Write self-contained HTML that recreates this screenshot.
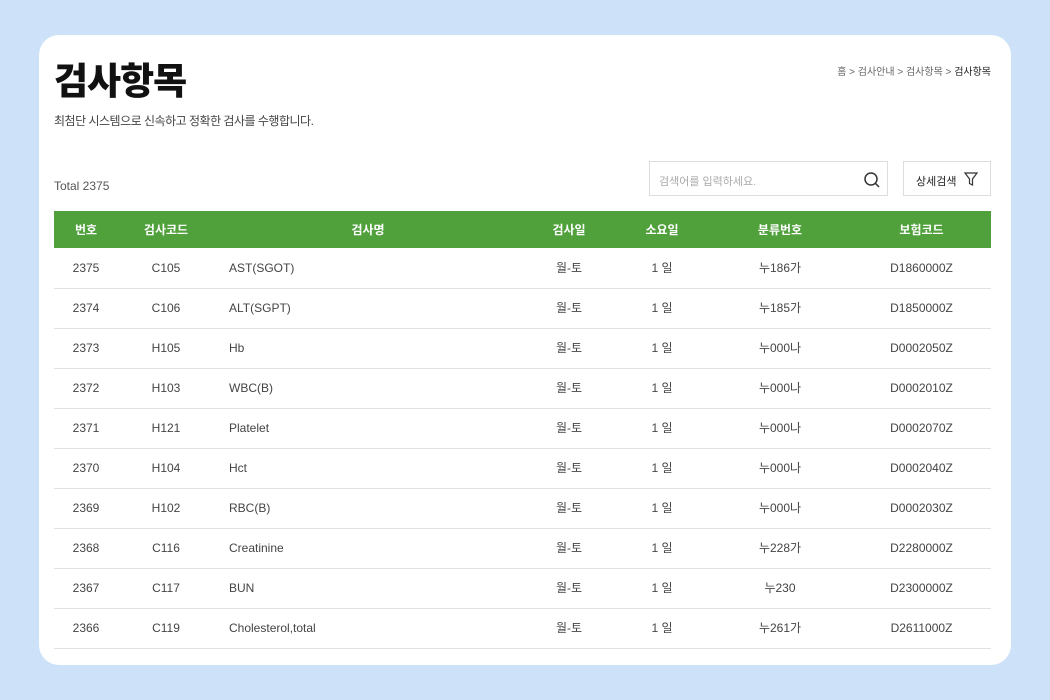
<!DOCTYPE html>
<html><head><meta charset="utf-8"><style>
*{margin:0;padding:0;box-sizing:border-box}
body{width:1050px;height:700px;background:#cde2f8;font-family:"Liberation Sans","Noto Sans CJK KR",sans-serif;position:relative;overflow:hidden}
.card{position:absolute;left:39px;top:35px;width:972px;height:630px;background:#fff;border-radius:20px}
h1{position:absolute;left:54px;top:58px;font-size:37px;font-weight:900;color:#111;letter-spacing:-1px;line-height:48px}
.sub{position:absolute;left:54px;top:112px;font-size:12px;color:#444;letter-spacing:-0.5px}
.bc{position:absolute;right:59px;top:63px;font-size:10px;color:#666}
.bc b{color:#222;font-weight:normal}
.total{position:absolute;left:54px;top:179px;font-size:12px;color:#555}
.search{position:absolute;left:649px;top:161px;width:239px;height:35px;border:1px solid #ddd;font-size:11px;color:#aaa;padding:11px 9px}
.search svg{position:absolute;right:4px;top:7px}
.adv{position:absolute;left:903px;top:161px;width:88px;height:35px;border:1px solid #ddd;font-size:11px;color:#222;padding:11px 12px}
.adv svg{position:absolute;right:11px;top:9px}
table{position:absolute;left:54px;top:211px;width:937px;border-collapse:collapse;font-size:12px;color:#444}
th{background:#50a03c;color:#fff;font-weight:bold;height:37px;font-size:12px;padding:0}
td{height:40px;text-align:center;border-bottom:1px solid #e2e2e2;line-height:14px;padding:0}
td.n{text-align:left;padding-left:15px}
</style></head><body>
<div class="card"></div>
<h1>검사항목</h1>
<div class="sub">최첨단 시스템으로 신속하고 정확한 검사를 수행합니다.</div>
<div class="bc">홈 &gt; 검사안내 &gt; 검사항목 &gt; <b>검사항목</b></div>
<div class="total">Total 2375</div>
<div class="search">검색어를 입력하세요.<svg width="22" height="22" viewBox="0 0 22 22"><circle cx="10" cy="10" r="6" fill="none" stroke="#333" stroke-width="1.5"/><path d="M14.5 14.5 L18 18" stroke="#333" stroke-width="1.5"/></svg></div>
<div class="adv">상세검색<svg width="16" height="16" viewBox="0 0 16 16"><path d="M2 2 H14 L9.5 8 V14 L6.5 12.5 V8 Z" fill="none" stroke="#333" stroke-width="1.2"/></svg></div>
<table>
<colgroup><col style="width:64px"><col style="width:96px"><col style="width:308px"><col style="width:94px"><col style="width:92px"><col style="width:144px"><col></colgroup>
<tr><th>번호</th><th>검사코드</th><th>검사명</th><th>검사일</th><th>소요일</th><th>분류번호</th><th>보험코드</th></tr>
<tr><td>2375</td><td>C105</td><td class="n">AST(SGOT)</td><td>월-토</td><td>1 일</td><td>누186가</td><td>D1860000Z</td></tr>
<tr><td>2374</td><td>C106</td><td class="n">ALT(SGPT)</td><td>월-토</td><td>1 일</td><td>누185가</td><td>D1850000Z</td></tr>
<tr><td>2373</td><td>H105</td><td class="n">Hb</td><td>월-토</td><td>1 일</td><td>누000나</td><td>D0002050Z</td></tr>
<tr><td>2372</td><td>H103</td><td class="n">WBC(B)</td><td>월-토</td><td>1 일</td><td>누000나</td><td>D0002010Z</td></tr>
<tr><td>2371</td><td>H121</td><td class="n">Platelet</td><td>월-토</td><td>1 일</td><td>누000나</td><td>D0002070Z</td></tr>
<tr><td>2370</td><td>H104</td><td class="n">Hct</td><td>월-토</td><td>1 일</td><td>누000나</td><td>D0002040Z</td></tr>
<tr><td>2369</td><td>H102</td><td class="n">RBC(B)</td><td>월-토</td><td>1 일</td><td>누000나</td><td>D0002030Z</td></tr>
<tr><td>2368</td><td>C116</td><td class="n">Creatinine</td><td>월-토</td><td>1 일</td><td>누228가</td><td>D2280000Z</td></tr>
<tr><td>2367</td><td>C117</td><td class="n">BUN</td><td>월-토</td><td>1 일</td><td>누230</td><td>D2300000Z</td></tr>
<tr><td>2366</td><td>C119</td><td class="n">Cholesterol,total</td><td>월-토</td><td>1 일</td><td>누261가</td><td>D2611000Z</td></tr>
</table>
</body></html>
